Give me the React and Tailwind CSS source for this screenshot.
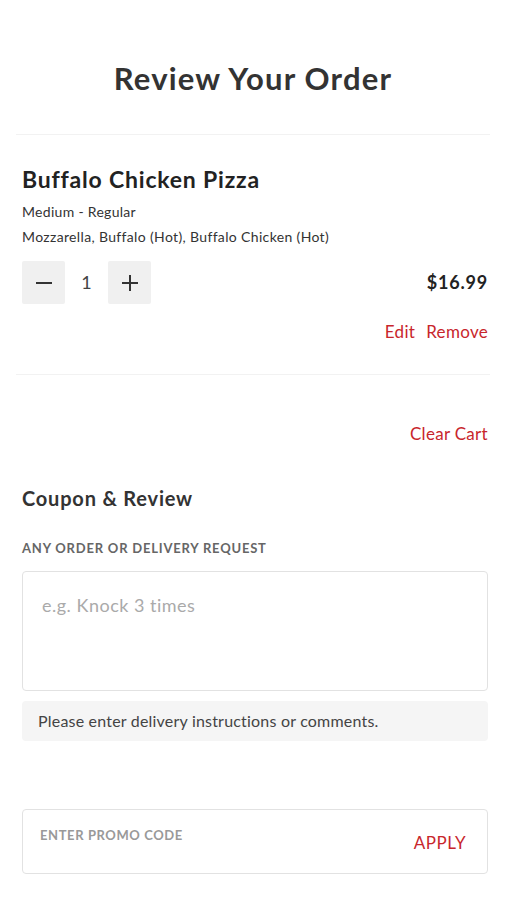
import React from 'react';

export default function App() {
  const font = { fontFamily: 'Lato, "Open Sans", Arial, sans-serif' };
  return (
    <div className="w-[507px] min-h-[900px] bg-white text-[#222]" style={font}>
      <div className="pl-[16px] pr-[17px]">
        <h1 className="pt-[58px] pb-[36px] text-center text-[31px] font-bold text-[#333] leading-[40px] tracking-[1.2px]">
          Review Your Order
        </h1>
        <div className="h-px bg-[#f2f2f2]" />

        {/* Cart item */}
        <div className="pl-[6px] pr-[2px] pt-[29px] pb-[31px]">
          <h2 className="text-[23px] font-bold leading-[30px] text-[#222] tracking-[0.8px]">Buffalo Chicken Pizza</h2>
          <p className="mt-[8px] text-[14px] leading-[20px] text-[#333] tracking-[0.3px]">Medium - Regular</p>
          <p className="mt-[5px] text-[14px] leading-[20px] text-[#333] tracking-[0.35px]">Mozzarella, Buffalo (Hot), Buffalo Chicken (Hot)</p>

          <div className="mt-[14px] flex items-center justify-between">
            <div className="flex items-center">
              <button className="w-[43px] h-[43px] bg-[#f0f0f0] rounded-[2px] flex items-center justify-center text-[#333]">
                <svg width="18" height="18" viewBox="0 0 18 18"><path d="M1 9h16" stroke="currentColor" strokeWidth="2" /></svg>
              </button>
              <span className="w-[43px] text-center text-[18px] text-[#444]">1</span>
              <button className="w-[43px] h-[43px] bg-[#f0f0f0] rounded-[2px] flex items-center justify-center text-[#333]">
                <svg width="18" height="18" viewBox="0 0 18 18"><path d="M1 9h16M9 1v16" stroke="currentColor" strokeWidth="2" /></svg>
              </button>
            </div>
            <span className="text-[18px] font-bold text-[#222] tracking-[0.8px]">$16.99</span>
          </div>

          <div className="mt-[17px] flex justify-end gap-[11px] text-[17px] text-[#c8262c] leading-[22px] tracking-[0.3px]">
            <button>Edit</button>
            <button>Remove</button>
          </div>
        </div>
        <div className="h-px bg-[#f2f2f2]" />

        <div className="pl-[6px] pr-[2px]">
          <div className="pt-[48px] flex justify-end">
            <button className="text-[17px] text-[#c8262c] leading-[22px] tracking-[0.3px]">Clear Cart</button>
          </div>

          <h3 className="mt-[40px] text-[20px] font-bold leading-[26px] text-[#333] tracking-[0.8px]">Coupon &amp; Review</h3>
          <p className="mt-[28px] text-[13px] font-bold uppercase tracking-[0.8px] text-[#666] leading-[18px]">Any order or delivery request</p>

          <textarea
            className="mt-[14px] block w-full h-[120px] border border-[#e2e2e2] rounded-[4px] px-[19px] py-[20px] text-[18px] tracking-[0.5px] text-[#333] placeholder:text-[#aaa] resize-none outline-none"
            placeholder="e.g. Knock 3 times"
          />
          <div className="mt-[10px] bg-[#f5f5f5] rounded-[4px] px-[16px] py-[9px] text-[16px] text-[#444] leading-[22px] tracking-[0.2px]">
            Please enter delivery instructions or comments.
          </div>

          <div className="mt-[68px] h-[65px] border border-[#e2e2e2] rounded-[4px] flex items-center justify-between pl-[17px] pr-[21px]">
            <input
              className="flex-1 -mt-[12px] text-[13px] font-bold uppercase tracking-[0.6px] placeholder:text-[#999] outline-none"
              placeholder="ENTER PROMO CODE"
            />
            <button className="text-[17px] text-[#c8262c] leading-[22px] mt-[2px] tracking-[0.5px]">APPLY</button>
          </div>
        </div>
      </div>
    </div>
  );
}
